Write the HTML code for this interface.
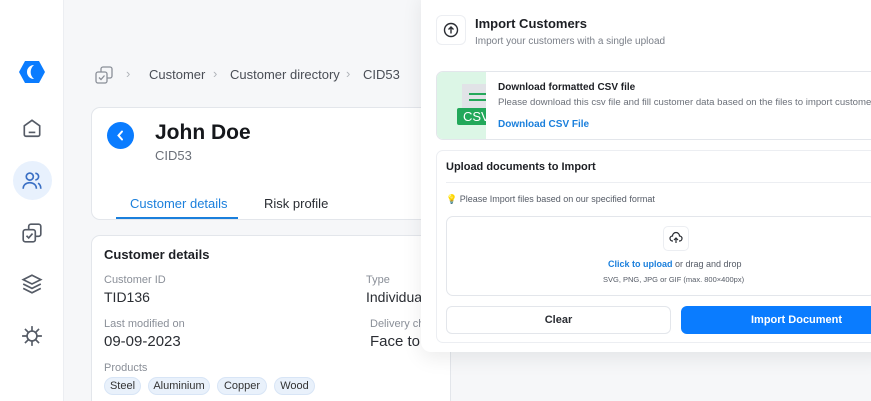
<!DOCTYPE html>
<html style="overflow:hidden;width:871px;height:401px"><head><style>
*{box-sizing:border-box;margin:0;padding:0}
body{width:871px;height:401px;overflow:hidden;background:#f6f7f9;font-family:"Liberation Sans",sans-serif;position:relative;color:#1d1f24}
.a{position:absolute;white-space:nowrap}
.side{position:absolute;left:0;top:0;width:64px;height:401px;background:#fff;border-right:1px solid #eceef2}
.card{position:absolute;background:#fff;border:1px solid #e3e6eb;border-radius:9px}
.lbl{font-size:11px;color:#8a8f98}
.val{font-size:15px;color:#2a2d33}
.chip{position:absolute;top:377px;height:18px;border-radius:9px;background:#e9f1fb;border:1px solid #d8e5f6;font-size:11px;color:#333;text-align:center;line-height:16px}
svg{position:absolute}
</style></head><body>
<div class="side"></div>
<svg style="left:19px;top:60px" width="26" height="24" viewBox="0 0 26 24"><path d="M6 1h14l6 11-6 11H6L0 12z" fill="#0a7cff"/><path d="M15 5a7 7 0 0 0 0 14a9 9 0 0 1 0-14z" fill="#fff"/></svg>
<svg style="left:21px;top:117px" width="22" height="22" viewBox="0 0 20 20" fill="none" stroke="#555b66" stroke-width="1.5"><path d="M3 8l7-5 7 5v8a1.5 1.5 0 0 1-1.5 1.5h-11A1.5 1.5 0 0 1 3 16z"/><path d="M7 14h6"/></svg>
<div class="a" style="left:13px;top:161px;width:39px;height:39px;border-radius:50%;background:#e8f1fd"></div>
<svg style="left:21px;top:170px" width="22" height="22" viewBox="0 0 20 20" fill="none" stroke="#3a6fc4" stroke-width="1.5"><circle cx="8" cy="6" r="3.2"/><path d="M2 17c0-3.5 2.7-5.5 6-5.5s6 2 6 5.5"/><path d="M13 3a3 3 0 0 1 0 6M15.5 12c1.5.8 2.5 2.5 2.5 5"/></svg>
<svg style="left:21px;top:222px" width="22" height="22" viewBox="0 0 20 20" fill="none" stroke="#555b66" stroke-width="1.5"><rect x="7" y="2" width="11" height="11" rx="2"/><rect x="2" y="7" width="11" height="11" rx="2" fill="#fff"/><path d="M5 12.5l2 2 3.5-4"/></svg>
<svg style="left:21px;top:273px" width="22" height="22" viewBox="0 0 20 20" fill="none" stroke="#555b66" stroke-width="1.5"><path d="M10 2l8 4-8 4-8-4z"/><path d="M2 10l8 4 8-4M2 14l8 4 8-4"/></svg>
<svg style="left:21px;top:325px" width="22" height="22" viewBox="0 0 20 20" fill="none" stroke="#555b66" stroke-width="1.5"><circle cx="10" cy="10" r="4.5"/><path d="M10 1v4.5M10 14.5V19M1 10h4.5M14.5 10H19M3.6 3.6l3.2 3.2M13.2 13.2l3.2 3.2M3.6 16.4l3.2-3.2M13.2 6.8l3.2-3.2"/></svg>

<svg style="left:94px;top:65px" width="20" height="20" viewBox="0 0 20 20" fill="none" stroke="#8a8f98" stroke-width="1.3"><rect x="7" y="2" width="11" height="11" rx="2"/><rect x="2" y="7" width="11" height="11" rx="2" fill="#f6f7f9"/><path d="M5 12.5l2 2 3.5-4"/></svg>
<div class="a" style="left:126px;top:66px;font-size:13px;color:#b0b4ba">›</div>
<div class="a" style="left:149px;top:67px;font-size:13px;color:#4a4e56">Customer</div>
<div class="a" style="left:213px;top:66px;font-size:13px;color:#b0b4ba">›</div>
<div class="a" style="left:230px;top:67px;font-size:13px;color:#4a4e56">Customer directory</div>
<div class="a" style="left:346px;top:66px;font-size:13px;color:#b0b4ba">›</div>
<div class="a" style="left:363px;top:67px;font-size:13px;color:#4a4e56">CID53</div>

<div class="card" style="left:91px;top:107px;width:360px;height:113px"></div>
<div class="a" style="left:107px;top:122px;width:27px;height:27px;border-radius:50%;background:#0a7cff"></div>
<svg style="left:114px;top:129px" width="13" height="13" viewBox="0 0 13 13" fill="none" stroke="#fff" stroke-width="2" stroke-linecap="round"><path d="M8 2.5L4.5 6.5 8 10.5"/></svg>
<div class="a" style="left:155px;top:121px;font-size:21px;font-weight:bold;color:#15171b">John Doe</div>
<div class="a" style="left:155px;top:148px;font-size:13px;color:#6b7079">CID53</div>
<div class="a" style="left:130px;top:196px;font-size:13px;color:#1a7fdc">Customer details</div>
<div class="a" style="left:116px;top:217px;width:122px;height:2px;background:#1a7fdc"></div>
<div class="a" style="left:264px;top:196px;font-size:13px;color:#2a2d33">Risk profile</div>

<div class="card" style="left:91px;top:235px;width:360px;height:180px"></div>
<div class="a" style="left:104px;top:247px;font-size:13px;font-weight:bold;color:#1d1f24">Customer details</div>
<div class="a lbl" style="left:104px;top:274px">Customer ID</div>
<div class="a val" style="left:104px;top:289px;font-size:14px">TID136</div>
<div class="a lbl" style="left:366px;top:274px">Type</div>
<div class="a val" style="left:366px;top:289px;font-size:14px">Individual</div>
<div class="a lbl" style="left:104px;top:318px">Last modified on</div>
<div class="a val" style="left:104px;top:333px">09-09-2023</div>
<div class="a lbl" style="left:370px;top:318px">Delivery ch</div>
<div class="a val" style="left:370px;top:333px">Face to l</div>
<div class="a lbl" style="left:104px;top:362px">Products</div>
<div class="chip" style="left:104px;width:37px">Steel</div>
<div class="chip" style="left:148px;width:62px">Aluminium</div>
<div class="chip" style="left:217px;width:50px">Copper</div>
<div class="chip" style="left:274px;width:41px">Wood</div>

<div class="a" style="left:421px;top:-10px;width:470px;height:362px;background:#fff;border-radius:10px;box-shadow:0 6px 20px rgba(0,0,0,.08)"></div>
<div class="a" style="left:436px;top:15px;width:30px;height:30px;border:1px solid #eceef2;border-radius:6px"></div>
<svg style="left:443px;top:22px" width="16" height="16" viewBox="0 0 16 16" fill="none" stroke="#2a2d33" stroke-width="1.4"><circle cx="8" cy="8" r="6.5"/><path d="M8 11.5V5M5.5 7.5L8 5l2.5 2.5"/></svg>
<div class="a" style="left:475px;top:16px;font-size:13px;font-weight:bold;color:#1d1f24">Import Customers</div>
<div class="a" style="left:475px;top:36px;font-size:10px;color:#7a7f88">Import your customers with a single upload</div>

<div class="a" style="left:436px;top:71px;width:450px;height:69px;border:1px solid #e3e6eb;border-radius:7px;overflow:hidden">
 <div class="a" style="left:0;top:0;width:49px;height:69px;background:#dcf6e6"></div>
</div>
<div class="a" style="left:462px;top:84px;width:24px;height:30px;background:#e1e3e7"></div>
<div class="a" style="left:469px;top:93px;width:17px;height:2px;background:#25a85b"></div>
<div class="a" style="left:469px;top:99px;width:17px;height:2px;background:#25a85b"></div>
<div class="a" style="left:457px;top:108px;width:29px;height:17px;background:#22a85a;border-radius:2px 0 0 2px;overflow:hidden;color:#fff;font-size:13px;line-height:17px;padding-left:6px">CSV</div>
<div class="a" style="left:498px;top:82px;font-size:10px;font-weight:bold;color:#1d1f24">Download formatted CSV file</div>
<div class="a" style="left:498px;top:97px;font-size:9.6px;color:#6b7079">Please download this csv file and fill customer data based on the files to import customers</div>
<div class="a" style="left:498px;top:119px;font-size:10px;font-weight:bold;color:#1a7fdc">Download CSV File</div>

<div class="a" style="left:436px;top:150px;width:450px;height:193px;border:1px solid #eceef2;border-radius:7px"></div>
<div class="a" style="left:446px;top:161px;font-size:11px;font-weight:bold;color:#1d1f24">Upload documents to Import</div>
<div class="a" style="left:446px;top:182px;width:430px;height:1px;background:#eceef2"></div>
<div class="a" style="left:446px;top:194px;font-size:9px;color:#555b66"><span style="color:#f0c040">💡</span> Please Import files based on our specified format</div>
<div class="a" style="left:446px;top:216px;width:430px;height:80px;border:1px solid #e3e6eb;border-radius:7px"></div>
<div class="a" style="left:663px;top:226px;width:26px;height:25px;border:1px solid #eceef2;border-radius:5px"></div>
<svg style="left:669px;top:231px" width="14" height="14" viewBox="0 0 14 14" fill="none" stroke="#2a2d33" stroke-width="1.2"><path d="M4 10H3.5a2.5 2.5 0 0 1 0-5 3.5 3.5 0 0 1 7 0 2.5 2.5 0 0 1 0 5H10"/><path d="M7 12V7M5 9l2-2 2 2"/></svg>
<div class="a" style="left:608px;top:259px;font-size:9px;color:#555b66"><b style="color:#1a7fdc">Click to upload</b> or drag and drop</div>
<div class="a" style="left:603px;top:275px;font-size:7.5px;color:#555b66">SVG, PNG, JPG or GIF (max. 800×400px)</div>
<div class="a" style="left:446px;top:306px;width:225px;height:28px;border:1px solid #e3e6eb;border-radius:6px;text-align:center;line-height:26px;font-size:11px;font-weight:bold;color:#2a2d33">Clear</div>
<div class="a" style="left:681px;top:306px;width:225px;height:28px;background:#0a7cff;border-radius:6px;font-size:11px;font-weight:bold;color:#fff;line-height:28px;padding-left:70px">Import Document</div>
</body></html>
